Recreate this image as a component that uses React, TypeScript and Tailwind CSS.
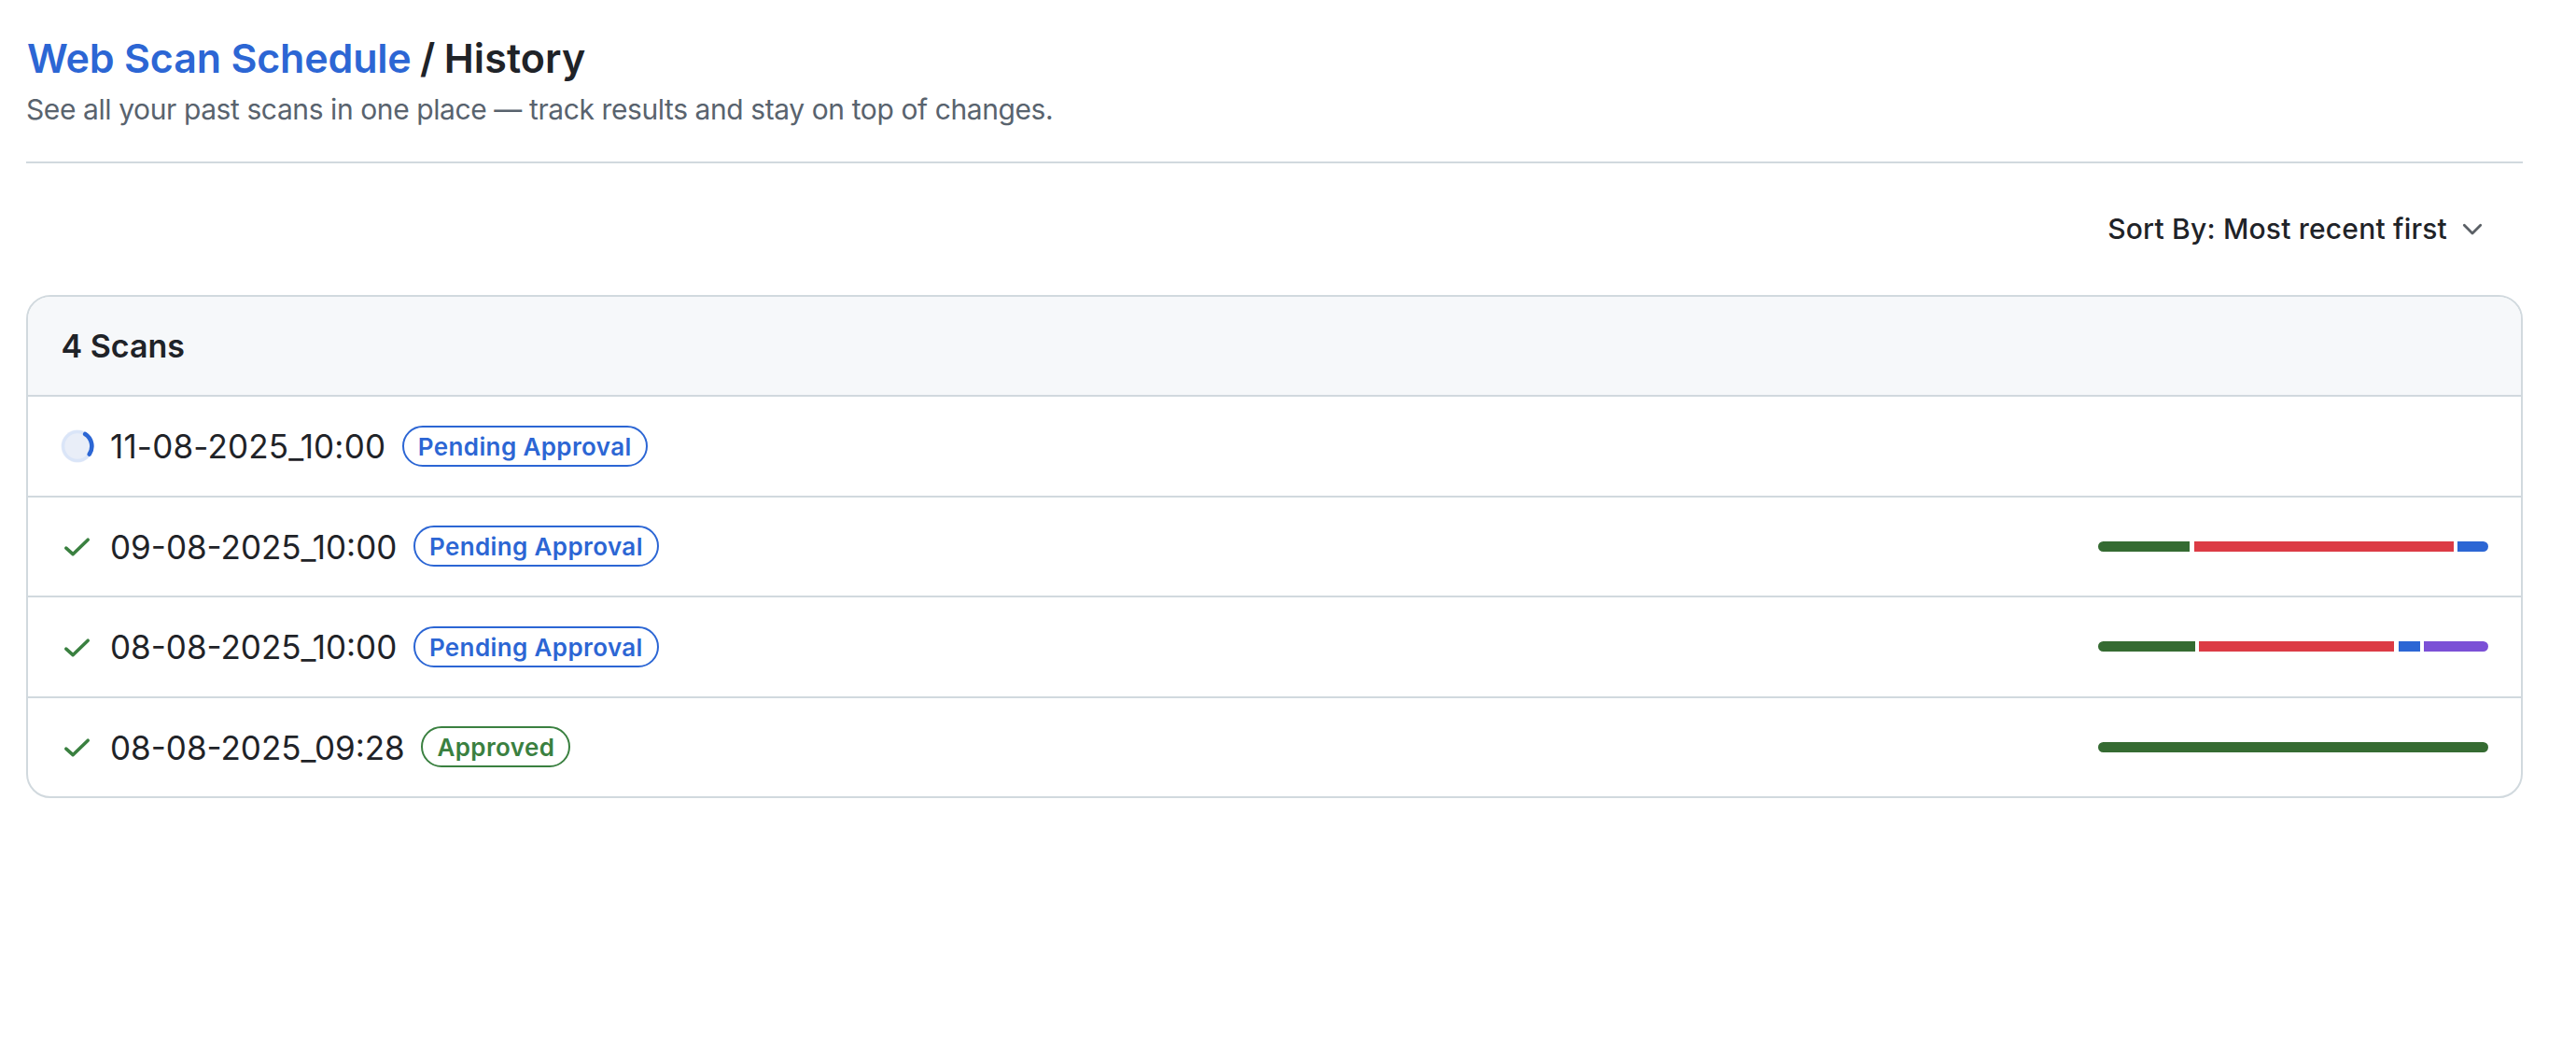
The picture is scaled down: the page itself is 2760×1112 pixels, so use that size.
import React from 'react';

type Scan = {
  name: string;
  status: 'Pending Approval' | 'Approved';
  running?: boolean;
  segments: { color: string; width: number }[];
};

const scans: Scan[] = [
  { name: '11-08-2025_10:00', status: 'Pending Approval', running: true, segments: [] },
  {
    name: '09-08-2025_10:00',
    status: 'Pending Approval',
    segments: [
      { color: 'bg-[#356b32]', width: 98 },
      { color: 'bg-[#dc3b45]', width: 278 },
      { color: 'bg-[#2c66d4]', width: 33 },
    ],
  },
  {
    name: '08-08-2025_10:00',
    status: 'Pending Approval',
    segments: [
      { color: 'bg-[#356b32]', width: 104 },
      { color: 'bg-[#dc3b45]', width: 209 },
      { color: 'bg-[#2c66d4]', width: 23 },
      { color: 'bg-[#7b50d6]', width: 69 },
    ],
  },
  {
    name: '08-08-2025_09:28',
    status: 'Approved',
    segments: [{ color: 'bg-[#356b32]', width: 418 }],
  },
];

function Spinner() {
  return (
    <svg className="size-9" viewBox="0 0 36 36" fill="none">
      <circle cx="18" cy="18" r="17.5" fill="#e9eef8" />
      <circle cx="18" cy="18" r="15.3" stroke="#dae5f8" strokeWidth="3.2" />
      <path d="M26.2 5A15.4 15.4 0 0 1 30.8 26.5" stroke="#2c66d4" strokeWidth="4.6" strokeLinecap="round" />
    </svg>
  );
}

function Check() {
  return (
    <svg className="size-9" viewBox="0 0 36 36" fill="none">
      <path d="M5.8 20.2L13.1 26.7L29.2 11.2" stroke="#3a8040" strokeWidth="3.6" strokeLinecap="round" strokeLinejoin="round" />
    </svg>
  );
}

function Badge({ status }: { status: Scan['status'] }) {
  return (
    <span
      className={
        status === 'Approved'
          ? 'flex h-11 items-center rounded-full border-2 border-[#3a8040] px-[15px] pt-0.5 text-[26px] leading-none font-semibold tracking-[0.38px] text-[#3a8040]'
          : 'flex h-11 items-center rounded-full border-2 border-[#2c66d4] px-[15px] pt-0.5 text-[26px] leading-none font-semibold tracking-[0.38px] text-[#2c66d4]'
      }
    >
      {status}
    </span>
  );
}

function ScanRow({ scan }: { scan: Scan }) {
  return (
    <li className="flex h-[107.5px] items-center justify-between border-t-2 border-[#d1d9de] pr-[35px] pl-[34.5px]">
      <div className="flex items-center">
        {scan.running ? <Spinner /> : <Check />}
        <span
          className={
            scan.running
              ? 'ml-[17.5px] pt-0.5 text-[35px] leading-none tracking-[0.2px]'
              : 'ml-[17.5px] pt-0.5 text-[35px] leading-none'
          }
        >
          {scan.name}
        </span>
        <span className="ml-[17.6px]">
          <Badge status={scan.status} />
        </span>
      </div>
      <div className="flex h-[11px] w-[418px] justify-between overflow-hidden rounded-full">
        {scan.segments.map((segment, i) => (
          <span key={i} className={segment.color} style={{ width: segment.width }} />
        ))}
      </div>
    </li>
  );
}

export default function App() {
  return (
    <main className="h-[1112px] bg-white pt-[34px] pr-[57px] pl-7 font-['Inter',sans-serif] text-[#1f2328]">
      <header className="h-[141px] border-b-2 border-[#d1d9de]">
        <h1 className="pl-px text-[43px] leading-[56px] font-semibold tracking-[-0.18px]">
          <a className="text-[#2c66d4]">Web Scan Schedule</a>
          <span className="[word-spacing:-1.2px]"> / </span>
          <span className="tracking-[0.1px]">History</span>
        </h1>
        <p className="pt-[5px] text-[30px] leading-[44px] tracking-[-0.41px] text-[#59636e]">
          See all your past scans in one place — track results and stay on top of changes.
        </p>
      </header>

      <div className="flex h-[141px] items-center justify-end gap-4 pr-[43px]">
        <button className="text-[30px] font-medium tracking-[0.2px]">Sort By: Most recent first</button>
        <svg className="h-3.5 w-[22px]" viewBox="0 0 22 14" fill="none">
          <path d="M2.3 2.3L11 11L19.7 2.3" stroke="#5b6066" strokeWidth="2.8" strokeLinecap="round" strokeLinejoin="round" />
        </svg>
      </div>

      <section className="h-[539px] overflow-hidden rounded-[26px] border-2 border-[#d1d9de]">
        <h2 className="flex h-[105px] items-center bg-[#f6f8fa] px-[35.5px] text-[34px] font-semibold">4 Scans</h2>
        <ul>
          {scans.map((scan) => (
            <ScanRow key={scan.name} scan={scan} />
          ))}
        </ul>
      </section>
    </main>
  );
}
